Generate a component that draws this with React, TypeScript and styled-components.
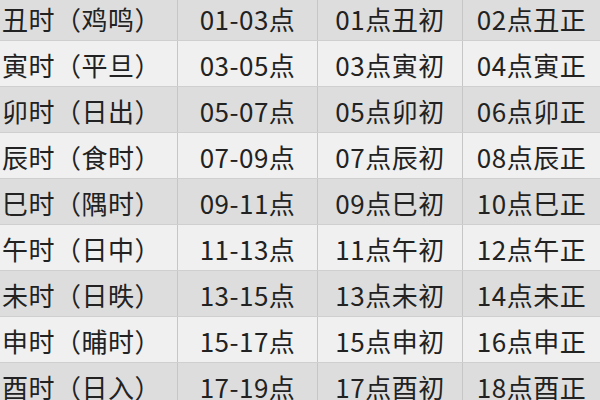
import styled, { createGlobalStyle } from "styled-components";

interface RowData {
  name: string;
  range: string;
  start: string;
  middle: string;
}

const rows: RowData[] = [
  { name: "丑时（鸡鸣）", range: "01-03点", start: "01点丑初", middle: "02点丑正" },
  { name: "寅时（平旦）", range: "03-05点", start: "03点寅初", middle: "04点寅正" },
  { name: "卯时（日出）", range: "05-07点", start: "05点卯初", middle: "06点卯正" },
  { name: "辰时（食时）", range: "07-09点", start: "07点辰初", middle: "08点辰正" },
  { name: "巳时（隅时）", range: "09-11点", start: "09点巳初", middle: "10点巳正" },
  { name: "午时（日中）", range: "11-13点", start: "11点午初", middle: "12点午正" },
  { name: "未时（日昳）", range: "13-15点", start: "13点未初", middle: "14点未正" },
  { name: "申时（晡时）", range: "15-17点", start: "15点申初", middle: "16点申正" },
  { name: "酉时（日入）", range: "17-19点", start: "17点酉初", middle: "18点酉正" },
];

const GlobalStyle = createGlobalStyle`
  html, body {
    margin: 0;
    padding: 0;
    background: #e6e6e6;
  }
`;

function App() {
  return (
    <>
      <GlobalStyle />
      <Viewport>
        <Table>
          {rows.map((row, i) => (
            <Row key={row.name} shade={i % 2 === 0}>
              <NameCell>{row.name}</NameCell>
              <Cell>{row.range}</Cell>
              <Cell>{row.start}</Cell>
              <Cell last>{row.middle}</Cell>
            </Row>
          ))}
        </Table>
      </Viewport>
    </>
  );
}

const Viewport = styled.div`
  width: 600px;
  height: 400px;
  overflow: hidden;
`;

const Table = styled.div`
  margin-top: -5px;
  display: flex;
  flex-direction: column;
`;

const Row = styled.div<{ shade: boolean }>`
  display: grid;
  grid-template-columns: 178px 140px 145px 1fr;
  height: 46px;
  box-sizing: border-box;
  border-bottom: 1px solid #cfcfcf;
  background: ${({ shade }) => (shade ? "#dddddd" : "#f0f0f0")};
  font-family: "Noto Sans CJK SC", "Noto Sans", sans-serif;
  font-size: 26px;
  letter-spacing: 0.5px;
  color: #222222;
`;

const Cell = styled.div<{ last?: boolean }>`
  display: flex;
  align-items: center;
  justify-content: center;
  box-sizing: border-box;
  padding-top: 3px;
  white-space: nowrap;
  border-right: ${({ last }) => (last ? "none" : "1px solid #c6c6c6")};
  line-height: 1;
`;

const NameCell = styled(Cell)`
  justify-content: flex-start;
  padding-left: 2px;
`;

export default App;
